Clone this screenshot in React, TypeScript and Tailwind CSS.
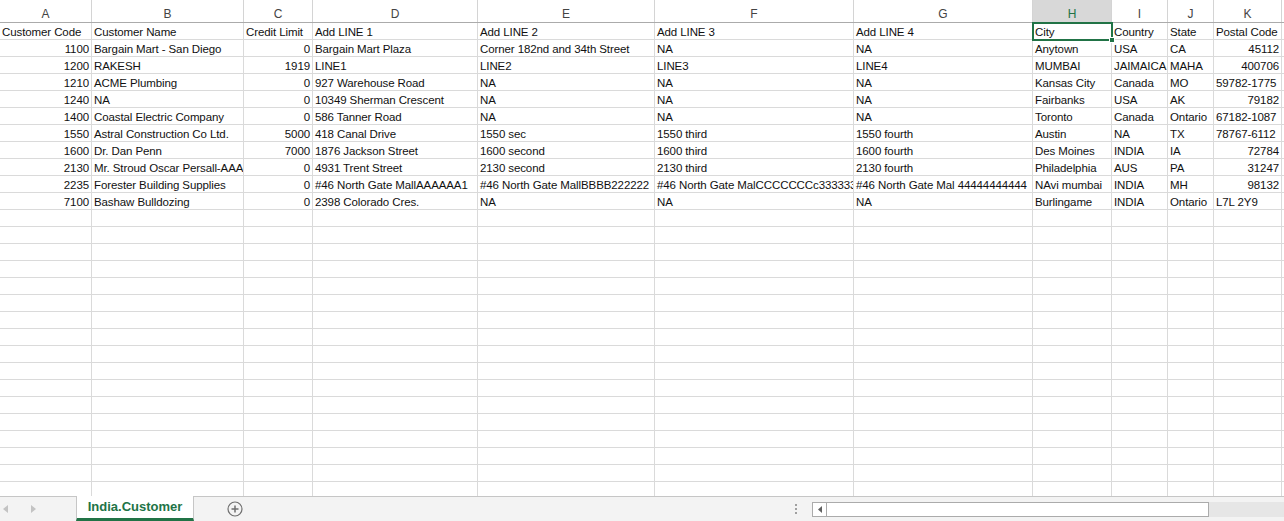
import React from "react";

type Cell = { v: string; num?: boolean };

const letters = ["A", "B", "C", "D", "E", "F", "G", "H", "I", "J", "K"];

const raw: (string | number)[][] = [
  ["Customer Code", "Customer Name", "Credit Limit", "Add LINE 1", "Add LINE 2", "Add LINE 3", "Add LINE 4", "City", "Country", "State", "Postal Code"],
  [1100, "Bargain Mart - San Diego", 0, "Bargain Mart Plaza", "Corner 182nd and 34th Street", "NA", "NA", "Anytown", "USA", "CA", 45112],
  [1200, "RAKESH", 1919, "LINE1", "LINE2", "LINE3", "LINE4", "MUMBAI", "JAIMAICA", "MAHA", 400706],
  [1210, "ACME Plumbing", 0, "927 Warehouse Road", "NA", "NA", "NA", "Kansas City", "Canada", "MO", "59782-1775"],
  [1240, "NA", 0, "10349 Sherman Crescent", "NA", "NA", "NA", "Fairbanks", "USA", "AK", 79182],
  [1400, "Coastal Electric Company", 0, "586 Tanner Road", "NA", "NA", "NA", "Toronto", "Canada", "Ontario", "67182-1087"],
  [1550, "Astral Construction Co Ltd.", 5000, "418 Canal Drive", "1550 sec", "1550 third", "1550 fourth", "Austin", "NA", "TX", "78767-6112"],
  [1600, "Dr. Dan Penn", 7000, "1876 Jackson Street", "1600 second", "1600 third", "1600 fourth", "Des Moines", "INDIA", "IA", 72784],
  [2130, "Mr. Stroud Oscar Persall-AAAAAA", 0, "4931 Trent Street", "2130 second", "2130 third", "2130 fourth", "Philadelphia", "AUS", "PA", 31247],
  [2235, "Forester Building Supplies", 0, "#46 North Gate MallAAAAAA1", "#46 North Gate MallBBBB222222", "#46 North Gate MalCCCCCCCc333333", "#46 North Gate Mal 44444444444", "NAvi mumbai", "INDIA", "MH", 98132],
  [7100, "Bashaw Bulldozing", 0, "2398 Colorado Cres.", "NA", "NA", "NA", "Burlingame", "INDIA", "Ontario", "L7L 2Y9"],
];

const rows: Cell[][] = raw.map((r) => r.map((v) => ({ v: String(v), num: typeof v === "number" })));
const emptyRows = 18;

const gridCols =
  "grid grid-cols-[92px_152px_69px_165px_177px_199px_179px_79px_56px_46px_68px_1fr]";

function Triangle({ dir, color }: { dir: "left" | "right"; color: string }) {
  return (
    <svg width="5" height="8" viewBox="0 0 5 8">
      {dir === "left" ? <path d="M5 0 L0 4 L5 8 Z" fill={color} /> : <path d="M0 0 L5 4 L0 8 Z" fill={color} />}
    </svg>
  );
}

export default function App() {
  return (
    <div className="h-[521px] w-[1284px] flex flex-col overflow-hidden bg-white font-['Liberation_Sans',Arial,sans-serif] text-[#111]">
      {/* sheet area */}
      <div className="flex-1 overflow-hidden">
        {/* column letters */}
        <div className={`${gridCols} h-[23px] border-b border-[#ababab]`}>
          {letters.map((l) => (
            <div
              key={l}
              className={
                l === "H"
                  ? "border-r border-[#d4d4d4] bg-[#d8d8d8] text-[#217346] text-center text-[12px] pt-[7px] leading-[14px]"
                  : "border-r border-[#d4d4d4] text-[#444] text-center text-[12px] pt-[7px] leading-[14px]"
              }
            >
              {l}
            </div>
          ))}
          <div />
        </div>

        {rows.map((r, ri) => (
          <div key={ri} className={gridCols}>
            {r.map((c, ci) => (
              <div
                key={ci}
                className={`h-[17px] border-r border-b border-[#dadada] text-[11.5px] pt-[2px] leading-[14px] tracking-[-0.1px] whitespace-nowrap overflow-hidden ${
                  c.num ? "text-right pr-[2px]" : "pl-[2px]"
                }`}
              >
                {c.v}
              </div>
            ))}
            <div className="h-[17px] border-b border-[#dadada]" />
          </div>
        ))}

        {Array.from({ length: emptyRows }).map((_, ri) => (
          <div key={"e" + ri} className={gridCols}>
            {letters.map((l) => (
              <div key={l} className="h-[17px] border-r border-b border-[#dadada]" />
            ))}
            <div className="h-[17px] border-b border-[#dadada]" />
          </div>
        ))}
      </div>

      {/* selected cell H1 overlay */}
      <div className="absolute left-[1032px] top-[22px] w-[81px] h-[19px] border-2 border-[#217346] pointer-events-none">
        <div className="absolute -right-[4px] -bottom-[4px] w-[6px] h-[6px] bg-[#217346] border border-white" />
      </div>

      {/* sheet tab bar */}
      <div className="h-[25px] flex items-stretch bg-[#f3f3f3] border-t border-[#c6c6c6]">
        <div className="w-[76px] flex items-center pl-[3px] gap-[23px]">
          <Triangle dir="left" color="#c3c3c3" />
          <Triangle dir="right" color="#c3c3c3" />
        </div>
        <div className="-mt-px w-[118px] bg-white border-l border-r border-[#c6c6c6] border-b-[3px] border-b-[#217346] flex items-center justify-center text-[13px] font-bold text-[#217346]">
          India.Customer
        </div>
        <div className="ml-[33px] flex items-center">
          <svg width="16" height="16" viewBox="0 0 16 16">
            <circle cx="8" cy="8" r="7" fill="none" stroke="#6f6f6f" strokeWidth="1.2" />
            <path d="M8 4.5 V11.5 M4.5 8 H11.5" stroke="#6f6f6f" strokeWidth="1.5" />
          </svg>
        </div>
        <div className="ml-auto w-[494px] flex items-center">
          <div className="w-[12px] flex flex-col items-center gap-[2px]">
            <div className="w-[2px] h-[2px] bg-[#a0a0a0]" />
            <div className="w-[2px] h-[2px] bg-[#a0a0a0]" />
            <div className="w-[2px] h-[2px] bg-[#a0a0a0]" />
          </div>
          <div className="ml-[10px] flex-1 flex items-center h-[15px]">
            <div className="w-[397px] h-[15px] flex bg-white border border-[#ababab]">
              <div className="w-[14px] h-full border-r border-[#ababab] flex items-center justify-center">
                <svg width="4" height="7" viewBox="0 0 4 7">
                  <path d="M4 0 L0 3.5 L4 7 Z" fill="#606060" />
                </svg>
              </div>
              <div className="flex-1" />
            </div>
            <div className="flex-1 h-[15px] bg-[#e6e6e6]" />
          </div>
        </div>
      </div>
    </div>
  );
}
